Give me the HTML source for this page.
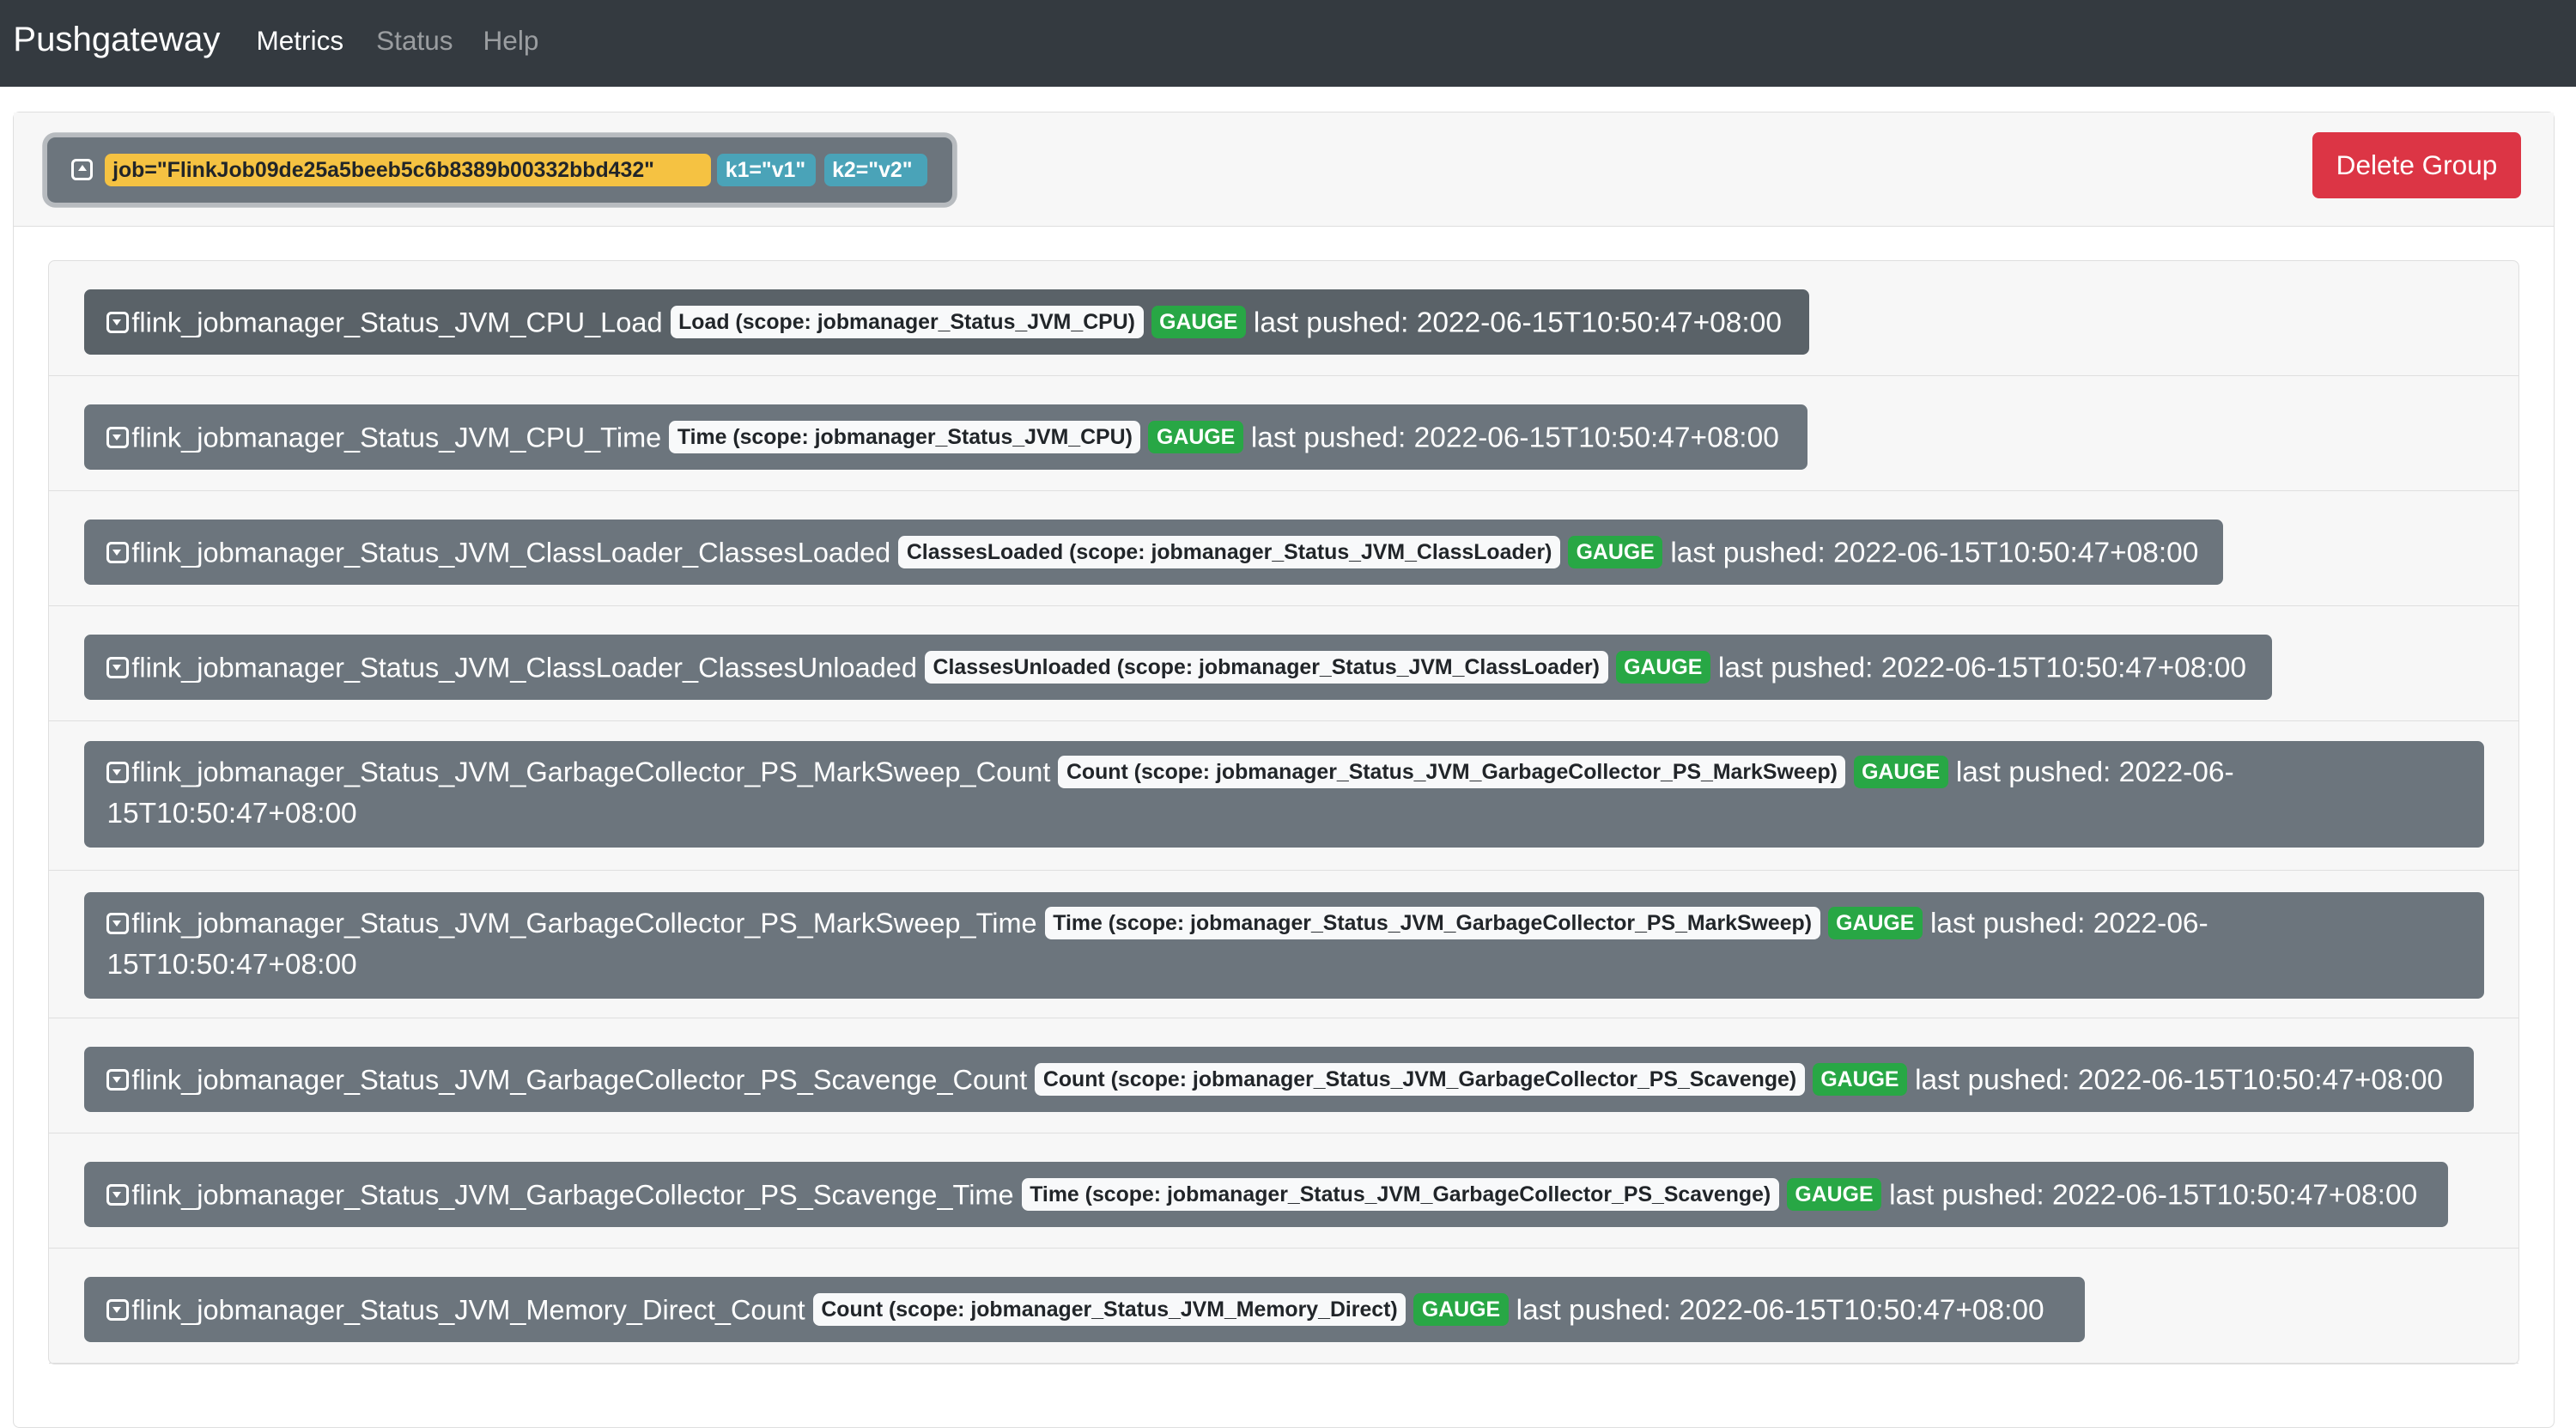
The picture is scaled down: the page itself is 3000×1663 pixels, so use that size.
<!DOCTYPE html>
<html><head><meta charset="utf-8">
<style>
html,body{margin:0;padding:0;background:#fff;}
body{zoom:1.9133;width:1568px;height:833px;overflow:hidden;font-family:"Liberation Sans",Arial,sans-serif;}
.nav{height:53px;background:#343a40;position:relative;}
.brand{position:absolute;left:8px;top:12px;font-size:21px;color:#fff;}
.nl{position:absolute;top:15px;font-size:16.5px;color:rgba(255,255,255,.5);}
.card{position:absolute;left:8px;top:68px;width:1546px;height:800px;border:1px solid #dfdfdf;border-radius:4px;background:#fff;}
.ch{height:69px;background:#f7f7f7;border-bottom:1px solid #dfdfdf;position:relative;}
.grp{position:absolute;left:20px;top:15px;width:551px;height:40px;background:#6c757d;border-radius:5px;box-shadow:0 0 0 3px #b7bbbf;}
.del{position:absolute;right:20px;top:12px;width:127px;height:40px;background:#dc3545;border-radius:4px;color:#fff;font-size:16.5px;line-height:40px;text-align:center;}
.bdg{position:absolute;top:10px;height:20px;line-height:20px;border-radius:4px;font-size:13px;font-weight:bold;padding:0 5px;box-sizing:border-box;white-space:nowrap;overflow:hidden;}
.ic{position:absolute;width:10px;height:10px;border:2px solid #fff;border-radius:3px;}
.list{position:absolute;left:21px;top:90px;width:1503px;background:#f7f7f7;border:1px solid #dfdfdf;border-radius:4px;}
.it{position:relative;border-bottom:1px solid #dfdfdf;box-sizing:border-box;}
.btn{position:absolute;left:21px;top:17px;background:#6c757d;border-radius:4px;color:#fff;font-size:17px;white-space:nowrap;overflow:hidden;box-sizing:border-box;padding:10px 0 0 14px;line-height:20px;}
.btn .i{display:inline-block;width:10px;height:10px;border:2px solid #fff;border-radius:3px;vertical-align:-1px;margin-right:2px;position:relative;}
.btn .i:after{content:"";position:absolute;left:2px;top:3px;border-left:3px solid transparent;border-right:3px solid transparent;border-top:4px solid #fff;}
.btn .p{font-size:17.5px;}
.l{display:inline-block;background:#f8f9fa;color:#212529;font-size:13px;font-weight:bold;padding:2px 5px;border-radius:4px;line-height:16px;vertical-align:2px;}
.g{display:inline-block;background:#28a745;color:#fff;font-size:13px;font-weight:bold;padding:2px 5px;border-radius:4px;line-height:16px;vertical-align:2px;}
</style></head><body>
<div class="nav"><div class="brand">Pushgateway</div><div class="nl" style="left:156px;color:#fff">Metrics</div><div class="nl" style="left:229px">Status</div><div class="nl" style="left:294px">Help</div></div>
<div class="card">
<div class="ch">
<div class="grp">
<div class="ic" style="left:15px;top:13px"></div>
<div style="position:absolute;left:19px;top:17px;border-left:3px solid transparent;border-right:3px solid transparent;border-bottom:4px solid #fff"></div>
<div class="bdg" style="left:35px;width:369px;background:#f5c242;color:#212529">job="FlinkJob09de25a5beeb5c6b8389b00332bbd432"</div>
<div class="bdg" style="left:408px;width:60px;background:#4aa3b8;color:#fff">k1="v1"</div>
<div class="bdg" style="left:473px;width:63px;background:#4aa3b8;color:#fff">k2="v2"</div>
</div>
<div class="del">Delete Group</div>
</div>
<div class="list">
<div class="it" style="height:70px"><div class="btn" style="width:1050px;height:40px;background:#5a6268"><span class="i"></span>flink_jobmanager_Status_JVM_CPU_Load <span class="l">Load (scope: jobmanager_Status_JVM_CPU)</span> <span class="g">GAUGE</span> <span class="p">last pushed: 2022-06-15T10:50:47+08:00</span></div></div>
<div class="it" style="height:70px"><div class="btn" style="width:1049px;height:40px"><span class="i"></span>flink_jobmanager_Status_JVM_CPU_Time <span class="l">Time (scope: jobmanager_Status_JVM_CPU)</span> <span class="g">GAUGE</span> <span class="p">last pushed: 2022-06-15T10:50:47+08:00</span></div></div>
<div class="it" style="height:70px"><div class="btn" style="width:1302px;height:40px"><span class="i"></span>flink_jobmanager_Status_JVM_ClassLoader_ClassesLoaded <span class="l">ClassesLoaded (scope: jobmanager_Status_JVM_ClassLoader)</span> <span class="g">GAUGE</span> <span class="p">last pushed: 2022-06-15T10:50:47+08:00</span></div></div>
<div class="it" style="height:70px"><div class="btn" style="width:1332px;height:40px"><span class="i"></span>flink_jobmanager_Status_JVM_ClassLoader_ClassesUnloaded <span class="l">ClassesUnloaded (scope: jobmanager_Status_JVM_ClassLoader)</span> <span class="g">GAUGE</span> <span class="p">last pushed: 2022-06-15T10:50:47+08:00</span></div></div>
<div class="it" style="height:91px"><div class="btn" style="width:1461px;height:65px;top:12px;line-height:25px;padding-top:7px"><span class="i"></span>flink_jobmanager_Status_JVM_GarbageCollector_PS_MarkSweep_Count <span class="l">Count (scope: jobmanager_Status_JVM_GarbageCollector_PS_MarkSweep)</span> <span class="g">GAUGE</span> <span class="p">last pushed: 2022-06-<br>15T10:50:47+08:00</span></div></div>
<div class="it" style="height:90px"><div class="btn" style="width:1461px;height:65px;top:13px;line-height:25px;padding-top:7px"><span class="i"></span>flink_jobmanager_Status_JVM_GarbageCollector_PS_MarkSweep_Time <span class="l">Time (scope: jobmanager_Status_JVM_GarbageCollector_PS_MarkSweep)</span> <span class="g">GAUGE</span> <span class="p">last pushed: 2022-06-<br>15T10:50:47+08:00</span></div></div>
<div class="it" style="height:70px"><div class="btn" style="width:1455px;height:40px"><span class="i"></span>flink_jobmanager_Status_JVM_GarbageCollector_PS_Scavenge_Count <span class="l">Count (scope: jobmanager_Status_JVM_GarbageCollector_PS_Scavenge)</span> <span class="g">GAUGE</span> <span class="p">last pushed: 2022-06-15T10:50:47+08:00</span></div></div>
<div class="it" style="height:70px"><div class="btn" style="width:1439px;height:40px"><span class="i"></span>flink_jobmanager_Status_JVM_GarbageCollector_PS_Scavenge_Time <span class="l">Time (scope: jobmanager_Status_JVM_GarbageCollector_PS_Scavenge)</span> <span class="g">GAUGE</span> <span class="p">last pushed: 2022-06-15T10:50:47+08:00</span></div></div>
<div class="it" style="height:70px"><div class="btn" style="width:1218px;height:40px"><span class="i"></span>flink_jobmanager_Status_JVM_Memory_Direct_Count <span class="l">Count (scope: jobmanager_Status_JVM_Memory_Direct)</span> <span class="g">GAUGE</span> <span class="p">last pushed: 2022-06-15T10:50:47+08:00</span></div></div>
</div>
</div>
</body></html>
